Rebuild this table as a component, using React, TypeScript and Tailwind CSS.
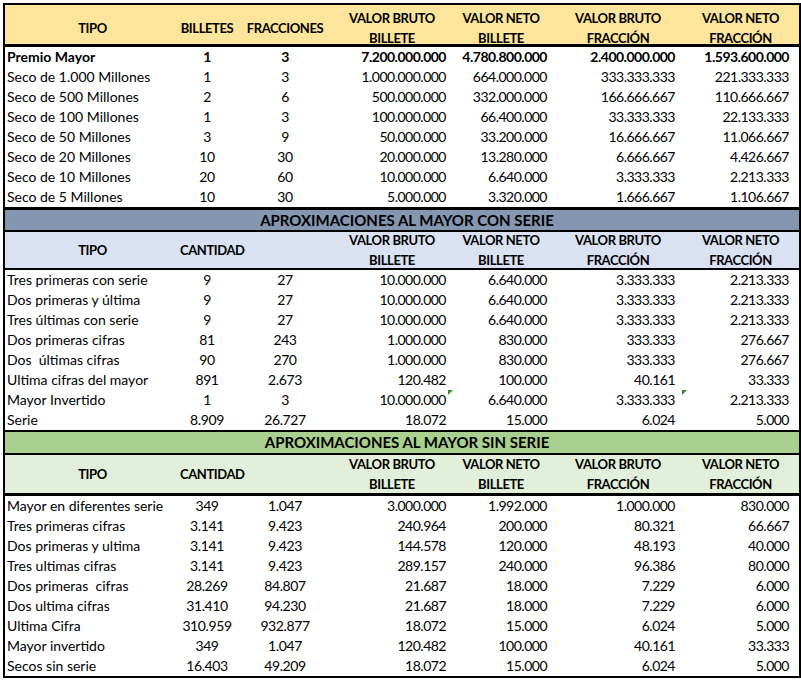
import React from "react";

const cols = "grid grid-cols-[175px_54px_102px_112px_106px_128px_117px] grid-rows-[minmax(0,1fr)]";

type Row = { tipo: string; vals: string[]; bold?: boolean; flags?: boolean };

const mayor: Row[] = [
  { tipo: "Premio Mayor", vals: ["1", "3", "7.200.000.000", "4.780.800.000", "2.400.000.000", "1.593.600.000"], bold: true },
  { tipo: "Seco de 1.000 Millones", vals: ["1", "3", "1.000.000.000", "664.000.000", "333.333.333", "221.333.333"] },
  { tipo: "Seco de 500 Millones", vals: ["2", "6", "500.000.000", "332.000.000", "166.666.667", "110.666.667"] },
  { tipo: "Seco de 100 Millones", vals: ["1", "3", "100.000.000", "66.400.000", "33.333.333", "22.133.333"] },
  { tipo: "Seco de 50 Millones", vals: ["3", "9", "50.000.000", "33.200.000", "16.666.667", "11.066.667"] },
  { tipo: "Seco de 20 Millones", vals: ["10", "30", "20.000.000", "13.280.000", "6.666.667", "4.426.667"] },
  { tipo: "Seco de 10 Millones", vals: ["20", "60", "10.000.000", "6.640.000", "3.333.333", "2.213.333"] },
  { tipo: "Seco de 5 Millones", vals: ["10", "30", "5.000.000", "3.320.000", "1.666.667", "1.106.667"] },
];

const conSerie: Row[] = [
  { tipo: "Tres primeras con serie", vals: ["9", "27", "10.000.000", "6.640.000", "3.333.333", "2.213.333"] },
  { tipo: "Dos primeras y última", vals: ["9", "27", "10.000.000", "6.640.000", "3.333.333", "2.213.333"] },
  { tipo: "Tres últimas con serie", vals: ["9", "27", "10.000.000", "6.640.000", "3.333.333", "2.213.333"] },
  { tipo: "Dos primeras cifras", vals: ["81", "243", "1.000.000", "830.000", "333.333", "276.667"] },
  { tipo: "Dos  últimas cifras", vals: ["90", "270", "1.000.000", "830.000", "333.333", "276.667"] },
  { tipo: "Ultima cifras del mayor", vals: ["891", "2.673", "120.482", "100.000", "40.161", "33.333"] },
  { tipo: "Mayor Invertido", vals: ["1", "3", "10.000.000", "6.640.000", "3.333.333", "2.213.333"], flags: true },
  { tipo: "Serie", vals: ["8.909", "26.727", "18.072", "15.000", "6.024", "5.000"] },
];

const sinSerie: Row[] = [
  { tipo: "Mayor en diferentes serie", vals: ["349", "1.047", "3.000.000", "1.992.000", "1.000.000", "830.000"] },
  { tipo: "Tres primeras cifras", vals: ["3.141", "9.423", "240.964", "200.000", "80.321", "66.667"] },
  { tipo: "Dos primeras y ultima", vals: ["3.141", "9.423", "144.578", "120.000", "48.193", "40.000"] },
  { tipo: "Tres ultimas cifras", vals: ["3.141", "9.423", "289.157", "240.000", "96.386", "80.000"] },
  { tipo: "Dos primeras  cifras", vals: ["28.269", "84.807", "21.687", "18.000", "7.229", "6.000"] },
  { tipo: "Dos ultima cifras", vals: ["31.410", "94.230", "21.687", "18.000", "7.229", "6.000"] },
  { tipo: "Ultima Cifra", vals: ["310.959", "932.877", "18.072", "15.000", "6.024", "5.000"] },
  { tipo: "Mayor invertido", vals: ["349", "1.047", "120.482", "100.000", "40.161", "33.333"] },
  { tipo: "Secos sin serie", vals: ["16.403", "49.209", "18.072", "15.000", "6.024", "5.000"] },
];

const Flag = () => (
  <svg className="absolute left-0 top-0" width="5" height="5" viewBox="0 0 5 5">
    <polygon points="0,0 5,0 0,5" fill="#2f8a2f" />
  </svg>
);

const DataRows = ({ rows }: { rows: Row[] }) => (
  <div>
    {rows.map((r) => (
      <div key={r.tipo} className={`${cols} h-[20px] items-center leading-[20px] ${r.bold ? "font-bold" : ""}`}>
        <div className="pl-[2px] whitespace-pre">{r.tipo}</div>
        <div className="text-center tracking-[-0.4px]">{r.vals[0]}</div>
        <div className="text-center tracking-[-0.4px]">{r.vals[1]}</div>
        <div className="text-right pr-[2px] tracking-[-0.5px]">{r.vals[2]}</div>
        <div className="relative text-right pr-[7px] tracking-[-0.5px]">
          {r.flags && <Flag />}
          {r.vals[3]}
        </div>
        <div className="text-right pr-[7px] tracking-[-0.5px]">{r.vals[4]}</div>
        <div className="relative text-right pr-[10px] tracking-[-0.5px]">
          {r.flags && <Flag />}
          {r.vals[5]}
        </div>
      </div>
    ))}
  </div>
);

const Header = ({ second, className }: { second: string; className: string }) => (
  <div className={`${cols} items-center font-bold text-[13px] tracking-[-0.4px] leading-[20px] ${className}`}>
    <div className="text-center">TIPO</div>
    <div className="text-center whitespace-nowrap">{second}</div>
    <div className="text-center">{second === "BILLETES" ? "FRACCIONES" : ""}</div>
    <div className="text-center">VALOR BRUTO<br />BILLETE</div>
    <div className="text-center">VALOR NETO<br />BILLETE</div>
    <div className="text-center">VALOR BRUTO<br />FRACCIÓN</div>
    <div className="text-center">VALOR NETO<br />FRACCIÓN</div>
  </div>
);

export default function App() {
  return (
    <div className="bg-white w-[801px] h-[683px] pl-[3px] pt-[3px] text-[14px] text-black" style={{ fontFamily: "Lato, 'Open Sans', sans-serif" }}>
      <div className="w-[798px] border-2 border-black">
        <Header second="BILLETES" className="h-[42px] pt-[6px] bg-[#fde59c] border-b-[3px] border-black" />
        <DataRows rows={mayor} />

        <div className="h-[25px] border-t-[3px] border-b-2 border-black bg-[#8496b0] font-bold text-[15px] text-center pl-[10px] leading-[20px]">
          APROXIMACIONES AL MAYOR CON SERIE
        </div>
        <Header second="CANTIDAD" className="h-[38px] bg-[#d9e1f2] border-b-2 border-black" />
        <DataRows rows={conSerie} />

        <div className="h-[25px] border-y-2 border-black bg-[#a9d08e] font-bold text-[15px] text-center pl-[10px] leading-[21px]">
          APROXIMACIONES AL MAYOR SIN SERIE
        </div>
        <Header second="CANTIDAD" className="h-[41px] bg-[#e2efda] border-b-[3px] border-black" />
        <DataRows rows={sinSerie} />
      </div>
    </div>
  );
}
